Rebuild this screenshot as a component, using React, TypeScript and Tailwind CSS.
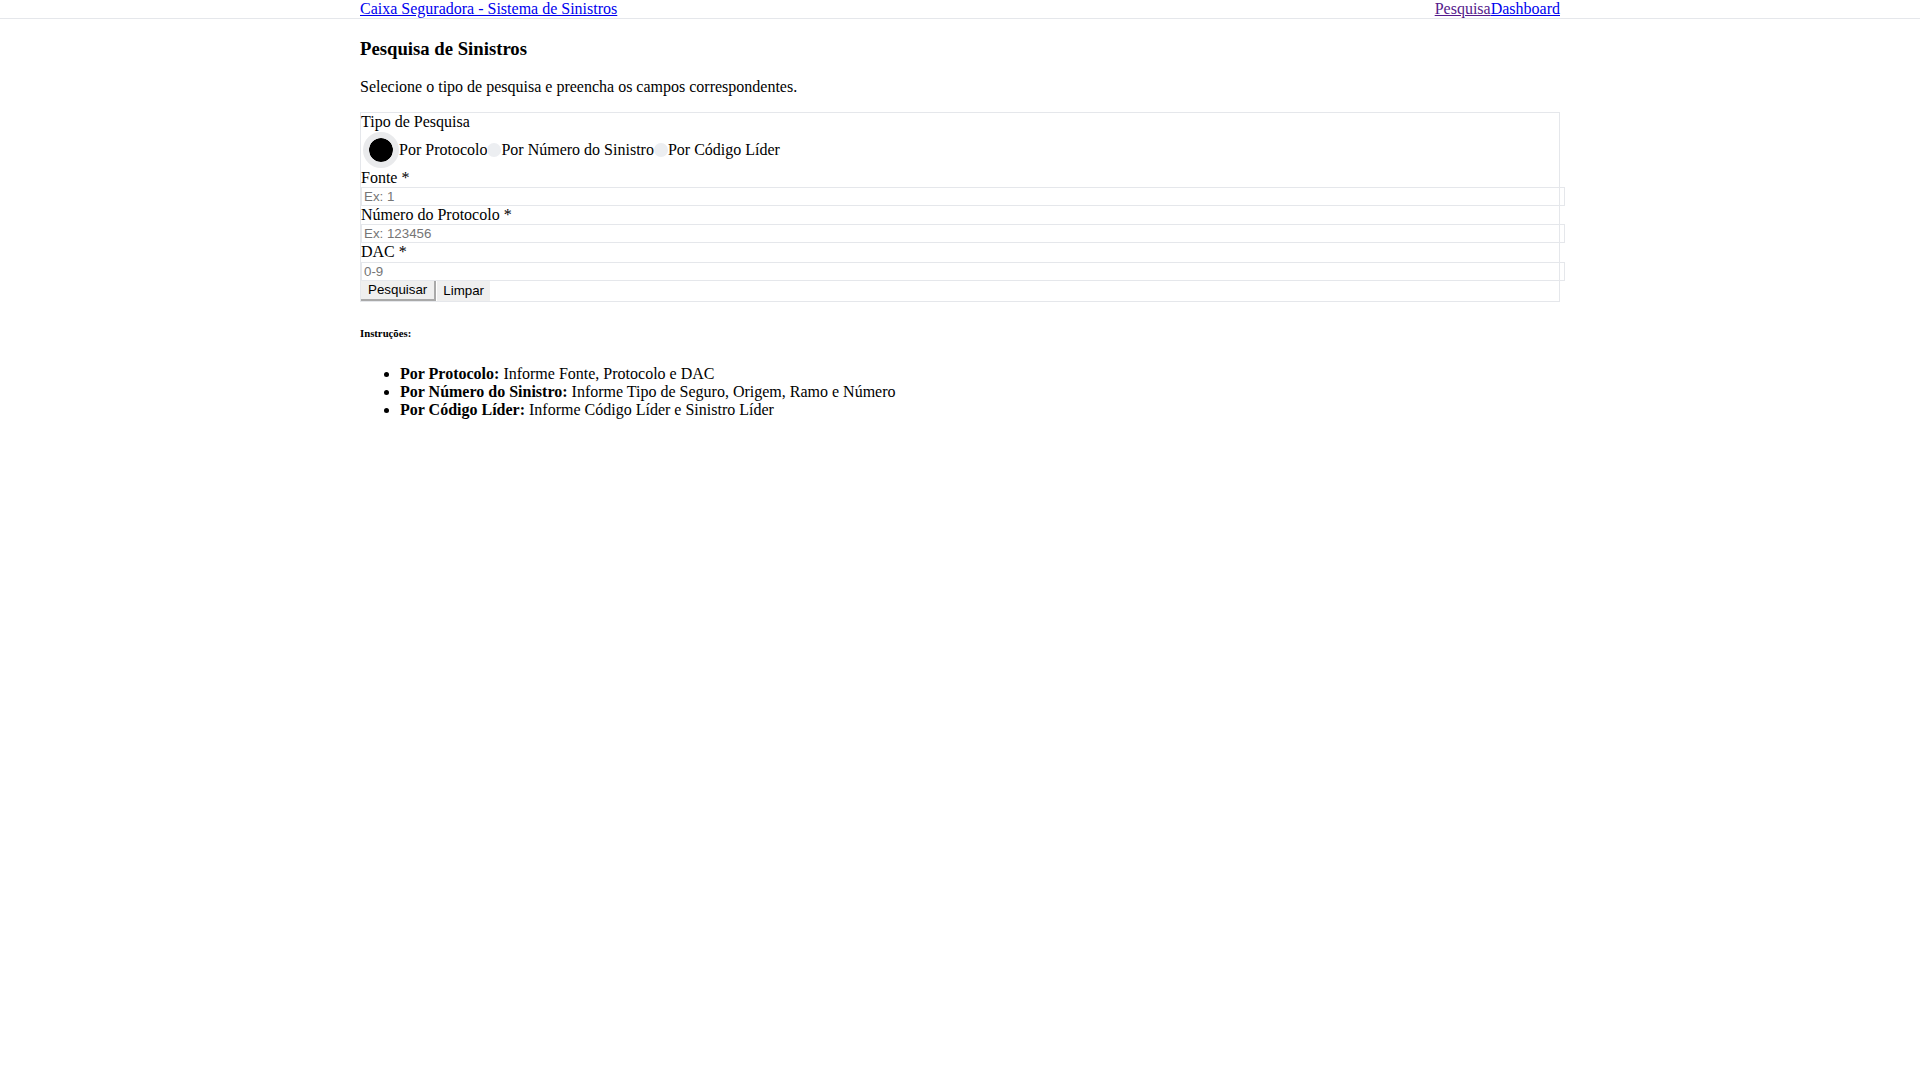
import React, { useState } from 'react';

const serif = "font-['Liberation_Serif','Times_New_Roman',serif]";
const sans = "font-['Liberation_Sans',Arial,sans-serif]";

const tipos = [
  { id: 'protocolo', label: 'Por Protocolo' },
  { id: 'sinistro', label: 'Por Número do Sinistro' },
  { id: 'lider', label: 'Por Código Líder' },
];

const campos = [
  { id: 'fonte', label: 'Fonte *', placeholder: 'Ex: 1' },
  { id: 'protocolo', label: 'Número do Protocolo *', placeholder: 'Ex: 123456' },
  { id: 'dac', label: 'DAC *', placeholder: '0-9' },
];

export default function App() {
  const [tipo, setTipo] = useState('protocolo');

  return (
    <div className={`min-h-screen bg-white text-black text-[16px] leading-[1.15] ${serif}`}>
      <header className="border-b border-[#e5e7eb]">
        <div className="mx-auto w-[1200px] flex justify-between">
          <a href="#" className="text-[#0000ee] underline">Caixa Seguradora - Sistema de Sinistros</a>
          <nav className="flex">
            <a href="#" className="text-[#551a8b] underline">Pesquisa</a>
            <a href="#" className="text-[#0000ee] underline">Dashboard</a>
          </nav>
        </div>
      </header>

      <main className="mx-auto w-[1200px]">
        <h1 className="mt-[19px] text-[18.72px] font-bold">Pesquisa de Sinistros</h1>
        <p className="mt-[18px]">Selecione o tipo de pesquisa e preencha os campos correspondentes.</p>

        <form className="mt-[16px] border border-[#e5e7eb]" onSubmit={(e) => e.preventDefault()}>
          <div>Tipo de Pesquisa</div>
          <div className="flex items-center h-[37px]">
            {tipos.map((t) => (
              <label key={t.id} className="flex items-center">
                <input
                  type="radio"
                  name="tipo"
                  checked={tipo === t.id}
                  onChange={() => setTipo(t.id)}
                  className={
                    tipo === t.id
                      ? 'appearance-none w-9 h-9 ml-[2px] rounded-full bg-black bg-clip-padding border-[6px] border-[#e9eaec]'
                      : 'appearance-none w-[14px] h-[14px] rounded-full bg-[#eceef1]'
                  }
                />
                <span>{t.label}</span>
              </label>
            ))}
          </div>

          {campos.map((c) => (
            <div key={c.id}>
              <label htmlFor={c.id} className="block">{c.label}</label>
              <input
                id={c.id}
                placeholder={c.placeholder}
                className={`block w-[calc(100%+6px)] h-[19px] px-[2px] border border-[#e5e7eb] text-[13.33px] placeholder:text-[#757575] outline-none ${sans}`}
              />
            </div>
          ))}

          <div className={`flex h-[20px] items-stretch text-[13.33px] ${sans}`}>
            <button type="submit" className="px-[7px] bg-[#efefef] border-r-2 border-b-2 border-[#a9a9a9] leading-none">Pesquisar</button>
            <button type="button" className="px-[6px] ml-[1px] bg-[#efefef] leading-none">Limpar</button>
          </div>
        </form>

        <h6 className="mt-[25px] text-[10.72px] font-bold">Instruções:</h6>
        <ul className="mt-[26px] list-disc pl-10 leading-[1.11]">
          <li><strong>Por Protocolo:</strong> Informe Fonte, Protocolo e DAC</li>
          <li><strong>Por Número do Sinistro:</strong> Informe Tipo de Seguro, Origem, Ramo e Número</li>
          <li><strong>Por Código Líder:</strong> Informe Código Líder e Sinistro Líder</li>
        </ul>
      </main>
    </div>
  );
}
